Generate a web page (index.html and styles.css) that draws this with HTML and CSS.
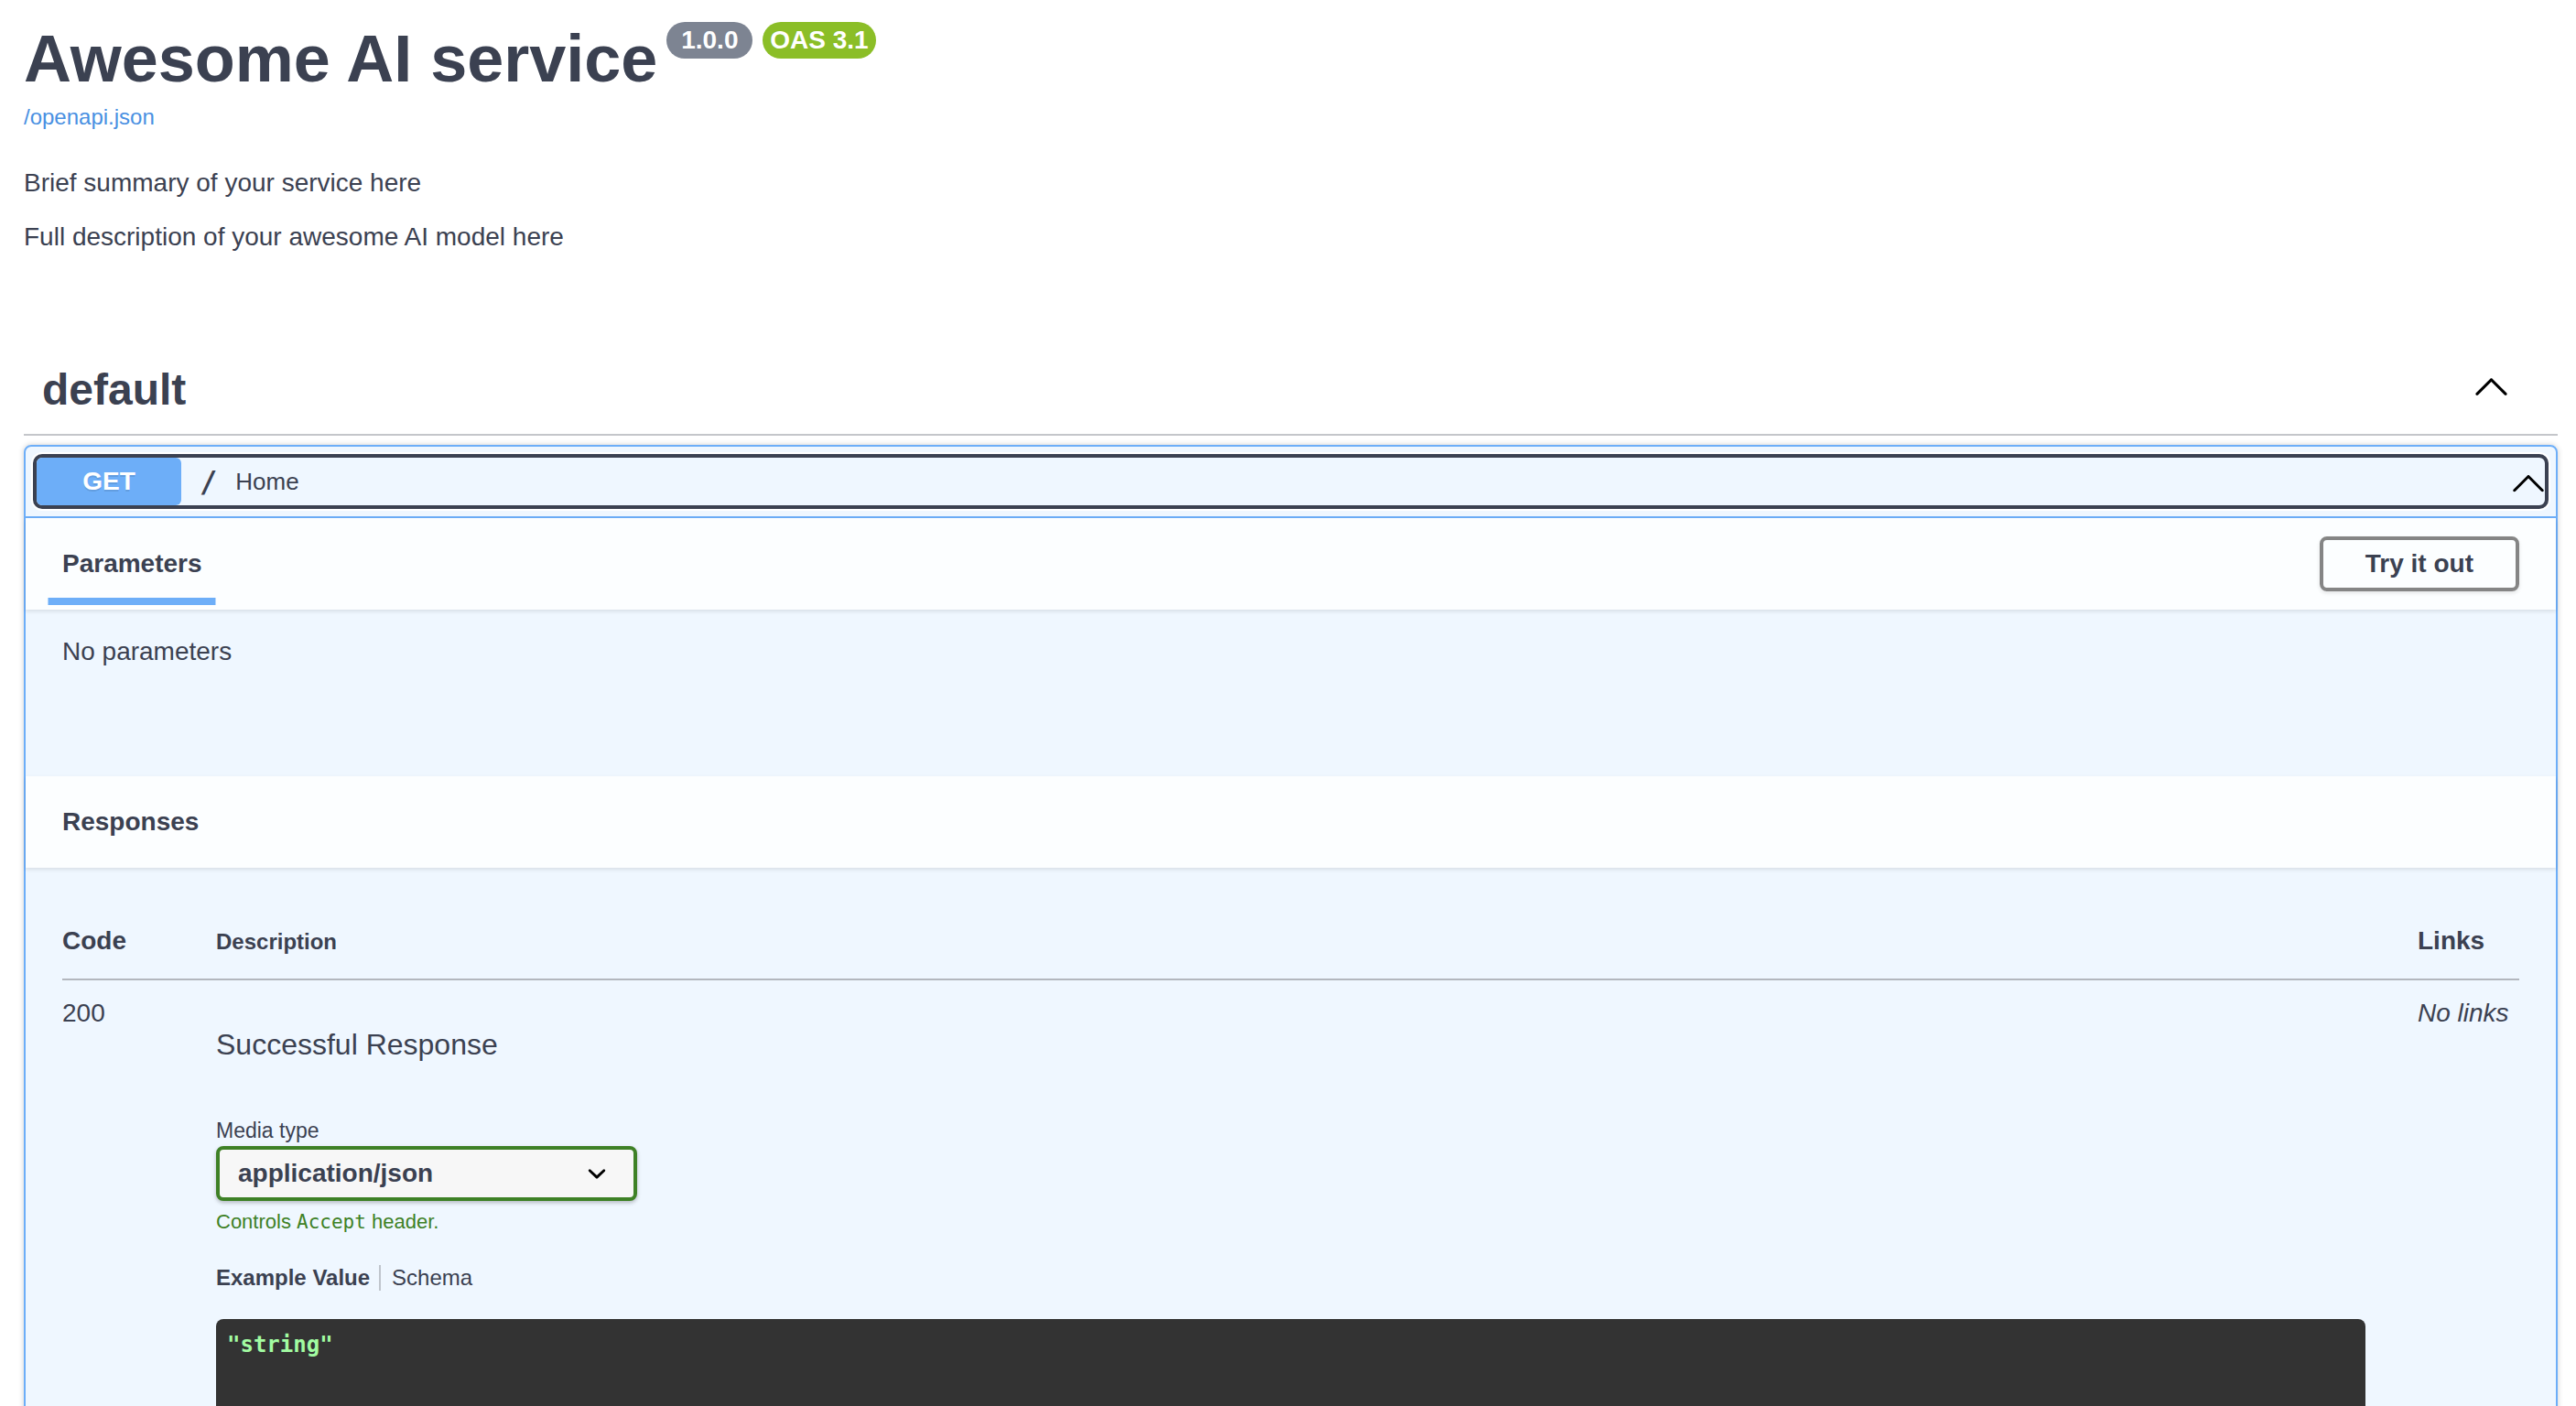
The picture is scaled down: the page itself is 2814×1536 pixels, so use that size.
FILE: index.html
```html
<!DOCTYPE html>
<html lang="en">
<head>
    <meta charset="UTF-8">
    <meta name="viewport" content="width=device-width, initial-scale=1.0">
    <title>Awesome AI service - Swagger UI</title>
    <link rel="stylesheet" href="styles.css">
</head>
<body>
    <div class="wrapper">
        <div class="info">
            <div class="title-row">
                <h2 class="title">Awesome AI service</h2>
                <span class="stamp version"> 1.0.0 </span>
                <span class="stamp oas">OAS 3.1</span>
            </div>
            <a class="spec-link" href="#">/openapi.json</a>
            <div class="description">
                <p>Brief summary of your service here</p>
                <p>Full description of your awesome AI model here</p>
            </div>
        </div>

        <div class="opblock-tag">
            <h3>default</h3>
            <button class="expand" aria-label="Collapse operation">
                <svg viewBox="0 0 20 20"><path d="M17.418 14.908c-.27.27-.71.27-.98 0L10 8.46l-6.438 6.448c-.27.27-.71.27-.98 0-.27-.27-.27-.71 0-.98L9.51 6.99c.27-.27.71-.27.98 0l6.928 6.938c.27.27.27.71 0 .98z"/></svg>
            </button>
        </div>

        <div class="opblock">
            <div class="opblock-summary">
                <div class="summary-control">
                    <span class="method">GET</span>
                    <span class="path">/</span>
                    <span class="summary-desc">Home</span>
                    <svg class="arrow" viewBox="0 0 20 20"><path d="M17.418 14.908c-.27.27-.71.27-.98 0L10 8.46l-6.438 6.448c-.27.27-.71.27-.98 0-.27-.27-.27-.71 0-.98L9.51 6.99c.27-.27.71-.27.98 0l6.928 6.938c.27.27.27.71 0 .98z"/></svg>
                </div>
            </div>

            <div class="section-header">
                <h4 class="tab-title"><span>Parameters</span></h4>
                <button class="btn">Try it out</button>
            </div>
            <div class="params-body">
                <p>No parameters</p>
            </div>

            <div class="section-header">
                <h4>Responses</h4>
            </div>
            <div class="responses">
                <div class="resp-row resp-head">
                    <div>Code</div>
                    <div class="col-desc">Description</div>
                    <div>Links</div>
                </div>
                <div class="resp-row resp-body">
                    <div>200</div>
                    <div class="col-desc">
                        <p class="resp-text">Successful Response</p>
                        <div class="media">
                            <small class="media-label">Media type</small>
                            <div class="select">
                                <span>application/json</span>
                                <svg viewBox="0 0 20 20"><path d="M13.418 7.859a.695.695 0 0 1 .978 0 .68.68 0 0 1 0 .969l-3.908 3.83a.697.697 0 0 1-.979 0l-3.908-3.83a.68.68 0 0 1 0-.969.695.695 0 0 1 .978 0L10 11l3.418-3.141z"/></svg>
                            </div>
                            <small class="accept">Controls <code>Accept</code> header.</small>
                        </div>
                        <ul class="example-tabs">
                            <li>Example Value</li>
                            <li>Schema</li>
                        </ul>
                        <pre class="code">"string"</pre>
                    </div>
                    <div><i>No links</i></div>
                </div>
            </div>
        </div>
    </div>
</body>
</html>
```

FILE: styles.css
```css
* {
    box-sizing: border-box;
}
html {
    overflow: hidden;
}
body {
    margin: 0;
    background: #fff;
    color: #3b4151;
    font-family: "Liberation Sans", Arial, sans-serif;
}
button {
    font-family: inherit;
    color: inherit;
}
.wrapper {
    padding: 23px 20px 0 26px;
}

/* info block */
.title-row {
    display: flex;
    align-items: flex-start;
}
.title {
    margin: 0;
    font-size: 72px;
    line-height: 82px;
    font-weight: 700;
}
.stamp {
    margin-top: 1px;
    padding: 4px 8px;
    border-radius: 114px;
    color: #fff;
    font-size: 28px;
    font-weight: 700;
    line-height: 32px;
    white-space: pre;
}
.stamp.version {
    margin-left: 10px;
    background: #7d8492;
}
.stamp.oas {
    margin-left: 11px;
    background: #8bbe27;
}
.spec-link {
    display: block;
    margin-top: 9px;
    font-size: 24px;
    line-height: 28px;
    color: #4990e2;
    text-decoration: none;
}
.description {
    display: flex;
    flex-direction: column;
    gap: 28px;
    margin-top: 42px;
}
.description p {
    margin: 0;
    font-size: 28px;
    line-height: 31px;
}

/* tag section */
.opblock-tag {
    display: flex;
    align-items: center;
    margin-top: 104px;
    padding: 20px 40px 20px 20px;
    border-bottom: 2px solid rgba(59,65,81,0.3);
}
.opblock-tag h3 {
    flex: 1;
    margin: 0;
    font-size: 48px;
    line-height: 56px;
    font-weight: 700;
}
.expand {
    align-self: flex-start;
    display: flex;
    padding: 0 10px;
    border: none;
    background: none;
}
.expand svg {
    width: 45px;
    height: 45px;
}

/* operation */
.opblock {
    margin-top: 10px;
    border: 2px solid #6daef8;
    border-radius: 8px;
    background: rgba(97,175,254,0.1);
    box-shadow: 0 0 6px rgba(0,0,0,0.19);
}
.opblock-summary {
    padding: 8px;
    border-bottom: 2px solid #6daef8;
}
.summary-control {
    display: flex;
    align-items: center;
    height: 60px;
    border: 4px solid #3b4151;
    border-radius: 10px;
    box-shadow: 0 0 0 2px #fff;
}
.method {
    align-self: stretch;
    display: flex;
    align-items: center;
    justify-content: center;
    width: 158px;
    border-radius: 6px;
    background: #6daef8;
    color: #fff;
    font-size: 28px;
    font-weight: 700;
    text-shadow: 0 2px 0 rgba(0,0,0,0.1);
}
.path {
    padding: 0 20px;
    font-family: "DejaVu Sans Mono", "Liberation Mono", monospace;
    font-size: 32px;
    font-weight: 700;
}
.summary-desc {
    flex: 1;
    font-size: 26px;
}
.arrow {
    width: 44px;
    height: 44px;
    margin-right: -4px;
}

.section-header {
    display: flex;
    align-items: center;
    justify-content: space-between;
    min-height: 100px;
    padding: 16px 40px;
    background: rgba(255,255,255,0.8);
    box-shadow: 0 2px 4px rgba(0,0,0,0.1);
}
.section-header h4 {
    margin: 0;
    font-size: 28px;
    line-height: 32px;
    font-weight: 700;
}
.tab-title span {
    position: relative;
}
.tab-title span::after {
    content: "";
    position: absolute;
    left: 50%;
    bottom: -30px;
    width: 120%;
    height: 8px;
    background: #6daef8;
    transform: translateX(-50%);
}
.btn {
    padding: 10px 46px;
    border: 4px solid #858585;
    border-radius: 8px;
    background: transparent;
    box-shadow: 0 2px 4px rgba(0,0,0,0.1);
    font-size: 28px;
    font-weight: 700;
    line-height: 32px;
}

.params-body {
    height: 182px;
    padding: 30px 40px;
}
.params-body p {
    margin: 0;
    font-size: 28px;
    line-height: 32px;
}

/* responses table */
.responses {
    padding: 40px;
}
.resp-row {
    display: grid;
    grid-template-columns: 168px 1fr 111px;
    font-size: 28px;
    line-height: 32px;
}
.resp-head {
    align-items: baseline;
    padding: 24px 0;
    border-bottom: 2px solid #b3b7be;
    font-weight: 700;
}
.resp-head .col-desc {
    font-size: 24px;
}
.resp-body {
    padding-top: 20px;
}
.resp-text {
    margin: 32px 0 0;
    font-size: 32px;
    line-height: 37px;
}
.media {
    margin-top: 62px;
}
.media-label {
    display: block;
    font-size: 23px;
    line-height: 26px;
}
.select {
    display: flex;
    align-items: center;
    justify-content: space-between;
    width: 460px;
    height: 60px;
    margin-top: 4px;
    padding: 0 20px;
    border: 4px solid #3e8126;
    border-radius: 8px;
    background: #f7f7f7;
    box-shadow: 0 2px 4px rgba(0,0,0,0.25);
    font-size: 28px;
    font-weight: 700;
}
.select svg {
    width: 40px;
    height: 40px;
}
.select span {
    flex: 1;
}
.accept {
    display: block;
    margin-top: 10px;
    color: #3e8126;
    font-size: 22px;
    line-height: 26px;
}
.accept code {
    font-family: "DejaVu Sans Mono", "Liberation Mono", monospace;
    font-size: 21px;
}
.example-tabs {
    display: flex;
    margin: 34px 0 0;
    padding: 0;
    list-style: none;
    font-size: 24px;
    line-height: 28px;
}
.example-tabs li:first-child {
    position: relative;
    padding-right: 24px;
    font-weight: 700;
}
.example-tabs li:first-child::after {
    content: "";
    position: absolute;
    right: 12px;
    top: 0;
    width: 2px;
    height: 100%;
    background: rgba(0,0,0,0.2);
}
.code {
    min-height: 144px;
    margin: 31px 57px 0 0;
    padding: 12px;
    border-radius: 8px;
    background: #333;
    color: #a2fca2;
    font-family: "DejaVu Sans Mono", "Liberation Mono", monospace;
    font-size: 24px;
    font-weight: 600;
}
```
